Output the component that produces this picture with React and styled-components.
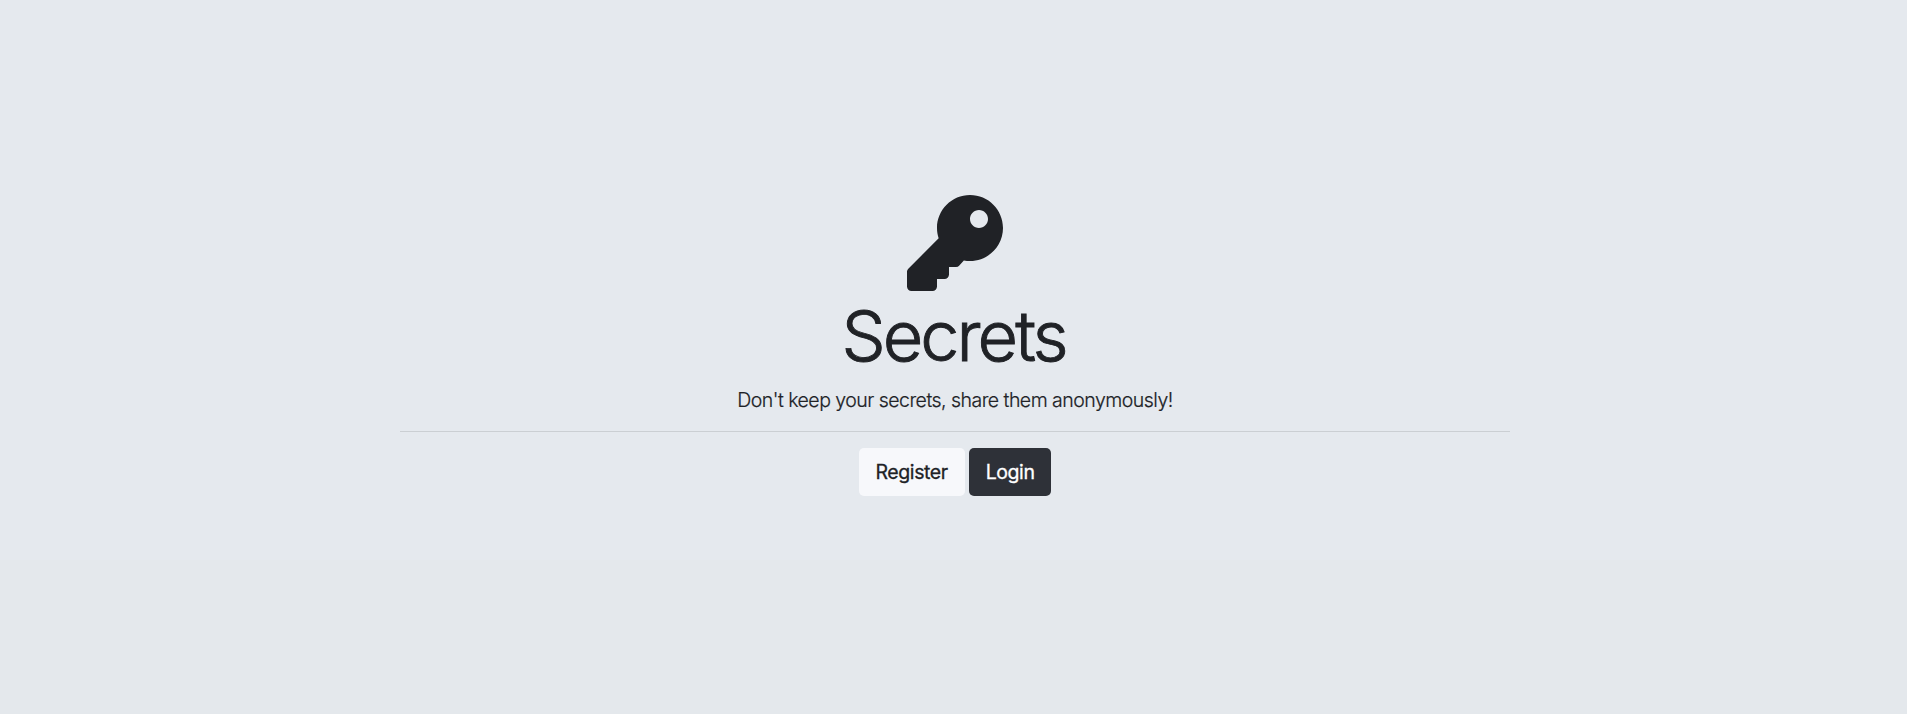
import React from "react";
import styled, { createGlobalStyle } from "styled-components";
import { FaKey } from "react-icons/fa";

const GlobalStyle = createGlobalStyle`
  * { box-sizing: border-box; }
  body { margin: 0; background: #e4e8ec; color: #202226; font-family: Inter, sans-serif; }
`;

const Hero = styled.main`
  height: 560px;
  padding: 195px 0 0 3px;
  background: #e5e9ee;
`;

const Container = styled.section`
  width: 1110px;
  margin: 0 auto;
  display: flex;
  flex-direction: column;
  align-items: center;
`;

const KeyIcon = styled(FaKey)`
  display: block;
  width: 96px;
  height: 96px;
  color: #202226;
`;

const Title = styled.h1`
  margin: 3px 3px 7px 0;
  font-size: 70px;
  font-weight: 300;
  line-height: 84px;
  letter-spacing: -2.95px;
  -webkit-text-stroke: 0.9px currentColor;
`;

const Lead = styled.p`
  margin: 0;
  font-size: 19.5px;
  font-weight: 300;
  line-height: 30px;
  letter-spacing: -0.52px;
  -webkit-text-stroke: 0.2px currentColor;
`;

const Divider = styled.hr`
  width: 100%;
  margin: 16px 0;
  border: 0;
  border-top: 1px solid #cbcfd3;
`;

const Actions = styled.div`
  display: flex;
  gap: 4px;
`;

const Button = styled.a`
  height: 48px;
  padding: 9px 17px;
  border-radius: 5px;
  background: ${({ $dark }) => ($dark ? "#2e3138" : "#f7f8fb")};
  color: ${({ $dark }) => ($dark ? "#fff" : "#202226")};
  font-size: 19.5px;
  font-weight: 400;
  line-height: 30px;
  letter-spacing: -0.42px;
  -webkit-text-stroke: 0.3px currentColor;
  cursor: pointer;
`;

export default function App() {
  return (
    <>
      <GlobalStyle />
      <Hero>
        <Container>
          <KeyIcon />
          <Title>Secrets</Title>
          <Lead>Don't keep your secrets, share them anonymously!</Lead>
          <Divider />
          <Actions>
            <Button>Register</Button>
            <Button $dark>Login</Button>
          </Actions>
        </Container>
      </Hero>
    </>
  );
}
